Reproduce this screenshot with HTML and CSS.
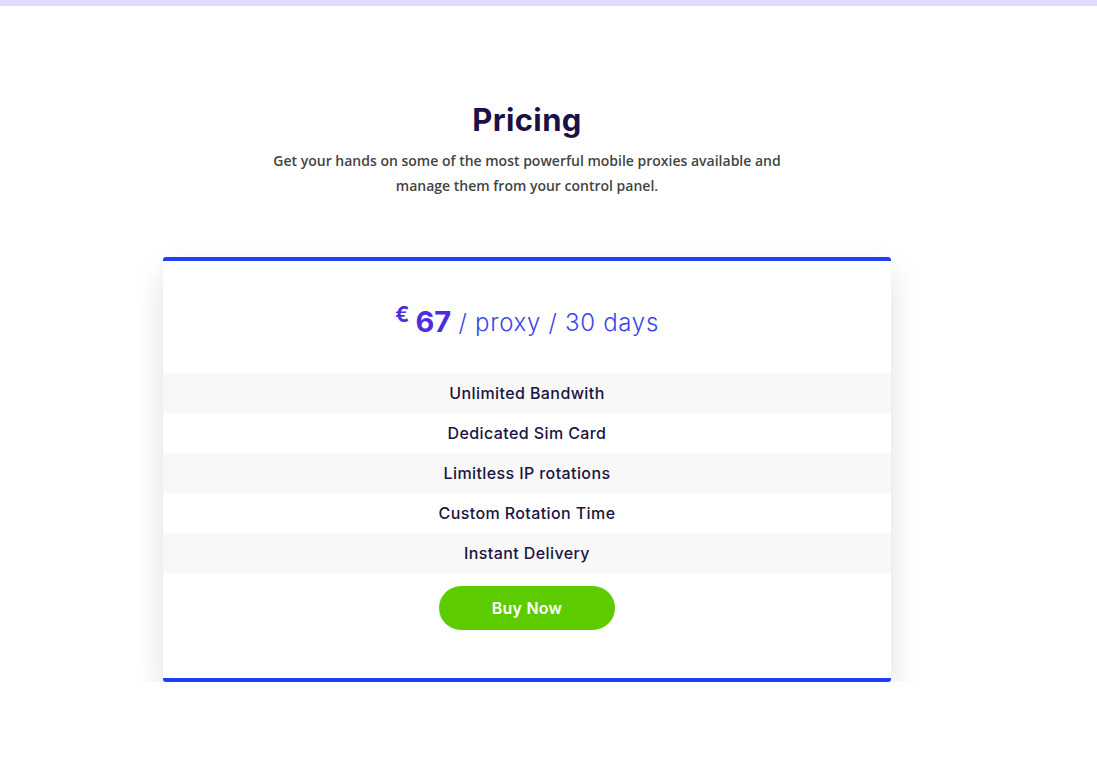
FILE: index.html
```html
<!DOCTYPE html>
<html lang="en">
<head>
<meta charset="utf-8">
<title>Pricing</title>
<link rel="stylesheet" href="styles.css">
</head>
<body>
<div class="topbar"></div>
<main class="page">
  <section class="pricing">
    <h1 class="title">Pricing</h1>
    <p class="subtitle">Get your hands on some of the most powerful mobile proxies available and<br>manage them from your control panel.</p>
    <div class="card">
      <div class="price">
        <sup class="currency">€</sup><span class="amount">67</span><span class="period"> / proxy / 30 days</span>
      </div>
      <ul class="features">
        <li class="feature">Unlimited Bandwith</li>
        <li class="feature">Dedicated Sim Card</li>
        <li class="feature">Limitless IP rotations</li>
        <li class="feature">Custom Rotation Time</li>
        <li class="feature">Instant Delivery</li>
      </ul>
      <div class="actions">
        <a class="buy" href="#">Buy Now</a>
      </div>
    </div>
  </section>
</main>
</body>
</html>
```
FILE: styles.css
```css
html, body {
  margin: 0;
  padding: 0;
  background: #ffffff;
}
body {
  font-family: Inter, "Open Sans", sans-serif;
}
.topbar {
  height: 6px;
  background: #dedefa;
}
.page {
  width: 1054px;
}
.pricing {
  display: flex;
  flex-direction: column;
  align-items: center;
  padding-top: 94px;
}
.title {
  margin: 0;
  font-family: Inter, sans-serif;
  font-weight: 700;
  font-size: 31px;
  letter-spacing: 0.4px;
  line-height: 40px;
  color: #1b1147;
}
.subtitle {
  margin: 8px 0 0;
  font-family: "Open Sans", sans-serif;
  font-weight: 600;
  font-size: 14px;
  line-height: 25px;
  color: #444444;
  text-align: center;
}
.card {
  margin-top: 59px;
  width: 728px;
  box-sizing: border-box;
  background: #ffffff;
  border-top: 4px solid #1e3ff7;
  border-bottom: 4px solid #1e3ff7;
  border-radius: 3px;
  box-shadow: 0 15px 30px rgba(0, 0, 0, 0.13);
  padding-bottom: 48px;
}
.price {
  height: 112px;
  display: flex;
  align-items: center;
  justify-content: center;
  padding-top: 8px;
  box-sizing: border-box;
  line-height: 1;
}
.currency {
  font-weight: 700;
  font-size: 21px;
  color: #4a2ee0;
  align-self: center;
  margin-top: -14px;
  margin-right: 6px;
  vertical-align: baseline;
}
.amount {
  font-weight: 700;
  font-size: 29px;
  color: #4a2ee0;
}
.period {
  font-weight: 300;
  font-size: 24px;
  letter-spacing: 0.7px;
  color: #3b47e8;
  white-space: pre;
  margin-top: 3px;
}
.features {
  list-style: none;
  margin: 0;
  padding: 0;
}
.feature {
  height: 40px;
  display: flex;
  align-items: center;
  justify-content: center;
  font-weight: 500;
  font-size: 16px;
  letter-spacing: 0.4px;
  color: #1a1440;
}
.feature:nth-child(odd) {
  background: #f8f8f8;
}
.actions {
  display: flex;
  justify-content: center;
  padding-top: 13px;
}
.buy {
  width: 176px;
  height: 44px;
  border-radius: 22px;
  background: #5ccc00;
  color: #ffffff;
  text-decoration: none;
  display: flex;
  align-items: center;
  justify-content: center;
  font-weight: 600;
  font-size: 16px;
  letter-spacing: 0.2px;
}
```
